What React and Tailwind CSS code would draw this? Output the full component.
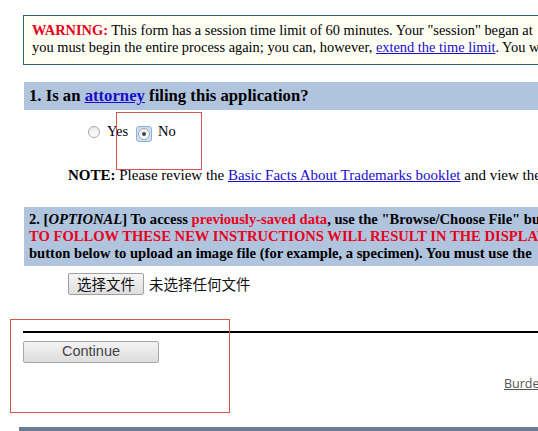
const serif = { fontFamily: '"Liberation Serif", "Times New Roman", serif' };

const Radio = ({ checked }) => (
    <span className={checked
        ? "inline-flex items-center justify-center w-[16px] h-[16px] rounded-[3px] bg-[#cfe0f5] border border-[#8fb0d8]"
        : "inline-flex items-center justify-center w-[16px] h-[16px]"}>
        <span className="w-[12px] h-[12px] rounded-full border border-[#a9a9a9] bg-gradient-to-b from-[#e9e9e9] to-[#ffffff] flex items-center justify-center">
            {checked && <span className="w-[4px] h-[4px] rounded-full bg-[#444]" />}
        </span>
    </span>
);

const App = () => {
    return (
        <div className="relative w-[538px] h-[431px] overflow-hidden bg-white text-black" style={serif}>
            {/* Warning box */}
            <div className="ml-[23px] mt-[15px] w-[600px] h-[50px] border border-[#2f6a74] bg-[#fffff4] pl-[8px] pt-[6px] text-[14.4px] leading-[17px] whitespace-nowrap">
                <div>
                    <span className="font-bold text-[#e8001c]">WARNING:</span> This form has a session time limit of 60 minutes. Your "session" began at
                </div>
                <div>
                    you must begin the entire process again; you can, however, <a className="text-[#1a0dcc] underline">extend the time limit</a>. You will
                </div>
            </div>

            {/* Section 1 */}
            <div className="ml-[24px] mt-[17px] h-[28px] bg-[#b0c4de] pl-[5px] flex items-center text-[16.7px] font-bold whitespace-nowrap">
                1. Is an&nbsp;<a className="text-[#1a0dcc] underline">attorney</a>&nbsp;filing this application?
            </div>

            <div className="ml-[86px] mt-[13px] flex items-center text-[14.5px] h-[18px]">
                <Radio />
                <span className="ml-[5px]">Yes</span>
                <span className="ml-[8px]"><Radio checked /></span>
                <span className="ml-[6px]">No</span>
            </div>

            <div className="ml-[68px] mt-[26px] text-[15px] leading-[17px] whitespace-nowrap">
                <span className="font-bold">NOTE:</span> Please review the <a className="text-[#1a0dcc] underline">Basic Facts About Trademarks booklet</a> and view the
            </div>

            {/* Section 2 */}
            <div className="ml-[24px] mt-[23px] h-[59px] bg-[#b0c4de] pl-[5px] pt-[4px] text-[14.6px] leading-[17px] font-bold whitespace-nowrap">
                <div>
                    2. [<i>OPTIONAL</i>] To access <span className="text-[#e8001c]">previously-saved data</span>, use the "Browse/Choose File" button
                </div>
                <div className="text-[#e8001c]">TO FOLLOW THESE NEW INSTRUCTIONS WILL RESULT IN THE DISPLAY</div>
                <div>button below to upload an image file (for example, a specimen). You must use the</div>
            </div>

            <div className="ml-[68px] mt-[7px] flex items-center text-[14.5px]" style={{ fontFamily: '"Noto Sans CJK SC", sans-serif' }}>
                <span className="h-[22px] w-[76px] flex items-center justify-center border border-[#a0a0a0] rounded-[2px] bg-gradient-to-b from-[#f6f6f6] to-[#dedede] text-[#111]">选择文件</span>
                <span className="ml-[5px] text-[#111]">未选择任何文件</span>
            </div>

            {/* Footer area */}
            <div className="ml-[23px] mt-[36px] h-[2px] bg-black" />
            <button className="ml-[23px] mt-[8px] w-[136px] h-[22px] border border-[#a8a8a8] rounded-[2px] bg-gradient-to-b from-[#f4f4f4] to-[#dddddd] text-[14.5px] text-[#444] flex items-center justify-center" style={{ fontFamily: '"Liberation Sans", Arial, sans-serif' }}>
                Continue
            </button>
            <div className="mt-[8px] h-[20px] whitespace-nowrap">
                <a className="ml-[504px] text-[12.5px] text-[#555] underline" style={{ fontFamily: '"Open Sans", sans-serif' }}>Burden Statement</a>
            </div>

            <div className="absolute left-[19px] right-0 top-[427px] h-[4px] bg-[#6e7d96]" />

            {/* red annotation boxes */}
            <div className="absolute left-[116px] top-[112px] w-[86px] h-[58px] border border-[#d9534f]" />
            <div className="absolute left-[10px] top-[319px] w-[220px] h-[94px] border border-[#d9534f]" />
        </div>
    );
};

export default App;
